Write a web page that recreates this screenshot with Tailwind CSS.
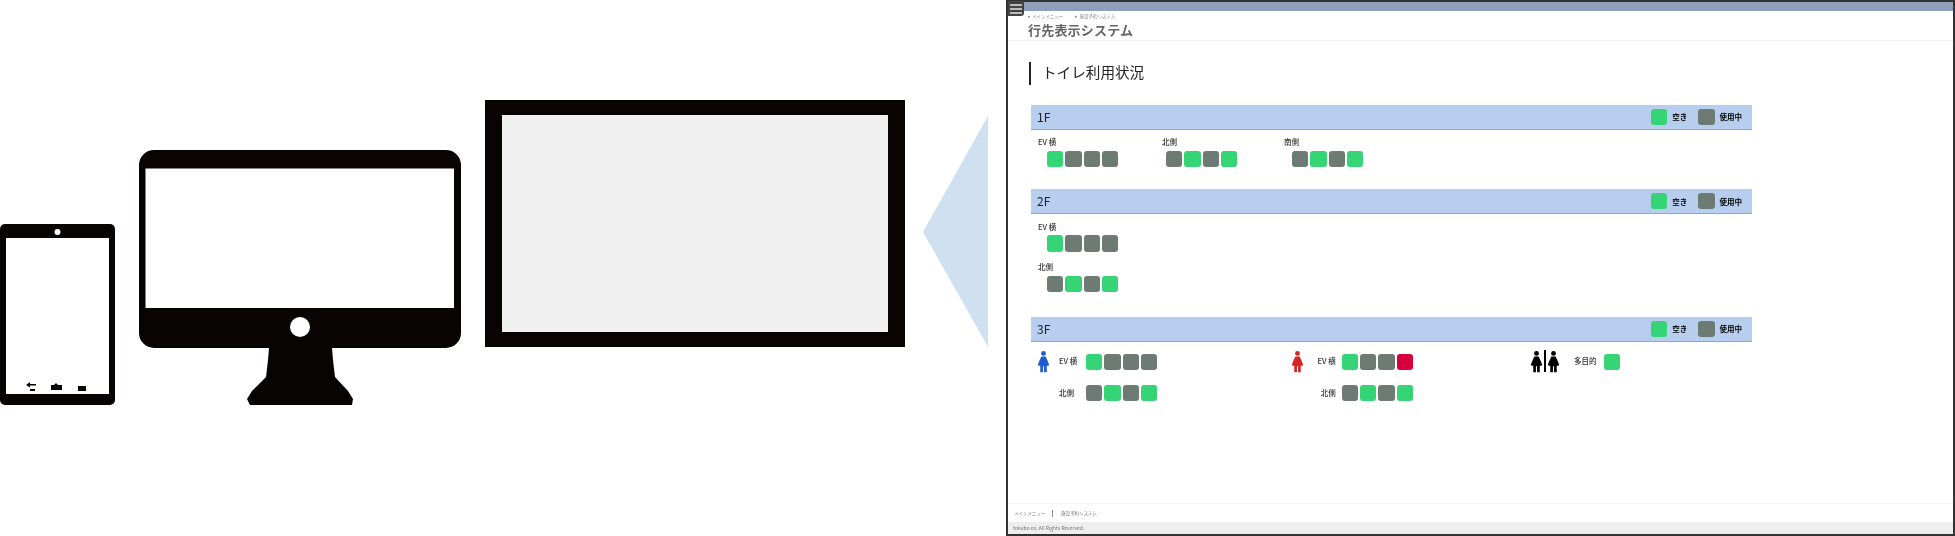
<!DOCTYPE html>
<html lang="ja">
<head>
<meta charset="UTF-8">
<title>トイレ利用状況</title>
<script src="https://cdn.jsdelivr.net/npm/@tailwindcss/browser@4"></script>
</head>
<body class="bg-white">
<svg class="hidden">
  <symbol id="person" viewBox="0 0 14 23">
    <circle cx="7" cy="2.8" r="2.6"/>
    <path d="M4.6 6.2h4.8c.7 1.6 2.2 5.2 3.6 8.6l-.6 1.4H10.500V23H7.600v-6.400H6.400V23H3.500v-6.800H1.600L1 14.800c1.400-3.400 2.900-7 3.600-8.600z"/>
  </symbol>
</svg>
<div class="flex w-[1955px] h-[536px] overflow-hidden font-['Noto_Sans_CJK_JP','Noto_Sans',sans-serif]">

  <!-- devices -->
  <svg class="w-[1006px] h-[536px] shrink-0" viewBox="0 0 1006 536">
    <rect x="0" y="224" width="115" height="181" rx="5" fill="#080404"/>
    <rect x="6" y="238" width="103" height="156" fill="#fff"/>
    <circle cx="57.500" cy="232" r="3" fill="#fff"/>
    <path d="M26 385l4-3v2h6v1.500h-6v2zM30 389h5v2h-5zM51 390v-5h3l2-2 2 2h4v5zM78 386h8v5h-8z" fill="#080404"/>

    <path d="M154 150h292a15 15 0 0 1 15 15v168a15 15 0 0 1-15 15H332l1 12 2 17 13 14 5 8-1 6H250l-3-6 5-8 14-14 2-17 1-12H154a15 15 0 0 1-15-15V165a15 15 0 0 1 15-15z" fill="#080404"/>
    <rect x="145.500" y="168.500" width="308.500" height="139.500" fill="#fff"/>
    <circle cx="300" cy="327" r="10" fill="#fff"/>

    <rect x="485" y="100" width="420" height="247" fill="#080404"/>
    <rect x="502" y="115" width="386" height="217" fill="#f0f0f0"/>
    <path d="M988 116v231l-65-115z" fill="#cfe0f0"/>
  </svg>

  <!-- browser capture -->
  <div class="relative flex flex-col w-[949px] h-[536px] border-2 border-[#333] bg-white blur-[0.5px]">
    <div class="absolute left-0 -top-[1px] w-[16px] h-[15px] bg-[#444] rounded-br-[3px] flex flex-col justify-center gap-[2px] px-[2px]">
      <span class="block h-[2px] bg-[#bbb]"></span>
      <span class="block h-[2px] bg-[#bbb]"></span>
      <span class="block h-[2px] bg-[#bbb]"></span>
    </div>
    <div class="h-[9px] bg-[#8da0b8] shrink-0"></div>

    <div class="h-[30px] shrink-0 border-b border-[#f0f0f0] pl-[20px]">
      <div class="flex gap-[12px] text-[4.500px] leading-[9px] h-[9px] mt-[1px] text-[#888]">
        <span>▸ メインメニュー</span>
        <span>▸ 施設予約システム</span>
      </div>
      <div class="text-[13px] leading-[18px] font-bold tracking-[0.2px] text-[#666]">行先表示システム</div>
    </div>

    <div class="ml-[21px] mt-[21px] h-[23px] border-l-2 border-[#222] pl-[11px] text-[14.600px] leading-[20px] text-[#222] shrink-0">トイレ利用状況</div>

    <!-- 1F -->
    <section class="ml-[23px] w-[721px] mt-[20px] shrink-0">
      <div class="flex items-center h-[25px] bg-[#b8ceee] border-b border-[#7fa6e0] pl-[6px] pr-[10px] text-[12px] text-[#222]">
        <span class="mr-auto">1F</span>
        <span class="w-[16.300px] h-[16.300px] rounded-[3px] bg-[#35d576]"></span>
        <span class="ml-[5px] w-[26px] text-[7.500px] font-bold text-black">空き</span>
        <span class="w-[16.300px] h-[16.300px] rounded-[3px] bg-[#6d7b74]"></span>
        <span class="ml-[5px] text-[7.500px] font-bold text-black">使用中</span>
      </div>
      <div class="flex pl-[7px] pt-[7px] text-[7.500px] leading-[10px] font-medium text-[#333]">
        <div class="w-[124px]">
          <div>EV 横</div>
          <div class="flex gap-[2px] mt-[4px] ml-[9px]">
            <span class="w-[16.300px] h-[16.300px] rounded-[3px] bg-[#35d576]"></span>
            <span class="w-[16.300px] h-[16.300px] rounded-[3px] bg-[#6d7b74]"></span>
            <span class="w-[16.300px] h-[16.300px] rounded-[3px] bg-[#6d7b74]"></span>
            <span class="w-[16.300px] h-[16.300px] rounded-[3px] bg-[#6d7b74]"></span>
          </div>
        </div>
        <div class="w-[122px]">
          <div>北側</div>
          <div class="flex gap-[2px] mt-[4px] ml-[4px]">
            <span class="w-[16.300px] h-[16.300px] rounded-[3px] bg-[#6d7b74]"></span>
            <span class="w-[16.300px] h-[16.300px] rounded-[3px] bg-[#35d576]"></span>
            <span class="w-[16.300px] h-[16.300px] rounded-[3px] bg-[#6d7b74]"></span>
            <span class="w-[16.300px] h-[16.300px] rounded-[3px] bg-[#35d576]"></span>
          </div>
        </div>
        <div>
          <div>南側</div>
          <div class="flex gap-[2px] mt-[4px] ml-[8px]">
            <span class="w-[16.300px] h-[16.300px] rounded-[3px] bg-[#6d7b74]"></span>
            <span class="w-[16.300px] h-[16.300px] rounded-[3px] bg-[#35d576]"></span>
            <span class="w-[16.300px] h-[16.300px] rounded-[3px] bg-[#6d7b74]"></span>
            <span class="w-[16.300px] h-[16.300px] rounded-[3px] bg-[#35d576]"></span>
          </div>
        </div>
      </div>
    </section>

    <!-- 2F -->
    <section class="ml-[23px] w-[721px] mt-[22px] shrink-0">
      <div class="flex items-center h-[25px] bg-[#b8ceee] border-b border-[#7fa6e0] pl-[6px] pr-[10px] text-[12px] text-[#222]">
        <span class="mr-auto">2F</span>
        <span class="w-[16.300px] h-[16.300px] rounded-[3px] bg-[#35d576]"></span>
        <span class="ml-[5px] w-[26px] text-[7.500px] font-bold text-black">空き</span>
        <span class="w-[16.300px] h-[16.300px] rounded-[3px] bg-[#6d7b74]"></span>
        <span class="ml-[5px] text-[7.500px] font-bold text-black">使用中</span>
      </div>
      <div class="pl-[7px] pt-[8px] text-[7.500px] leading-[10px] font-medium text-[#333]">
        <div>EV 横</div>
        <div class="flex gap-[2px] mt-[3px] ml-[9px]">
          <span class="w-[16.300px] h-[16.300px] rounded-[3px] bg-[#35d576]"></span>
          <span class="w-[16.300px] h-[16.300px] rounded-[3px] bg-[#6d7b74]"></span>
          <span class="w-[16.300px] h-[16.300px] rounded-[3px] bg-[#6d7b74]"></span>
          <span class="w-[16.300px] h-[16.300px] rounded-[3px] bg-[#6d7b74]"></span>
        </div>
        <div class="mt-[10px]">北側</div>
        <div class="flex gap-[2px] mt-[4px] ml-[9px]">
          <span class="w-[16.300px] h-[16.300px] rounded-[3px] bg-[#6d7b74]"></span>
          <span class="w-[16.300px] h-[16.300px] rounded-[3px] bg-[#35d576]"></span>
          <span class="w-[16.300px] h-[16.300px] rounded-[3px] bg-[#6d7b74]"></span>
          <span class="w-[16.300px] h-[16.300px] rounded-[3px] bg-[#35d576]"></span>
        </div>
      </div>
    </section>

    <!-- 3F -->
    <section class="ml-[23px] w-[721px] mt-[25px] shrink-0">
      <div class="flex items-center h-[25px] bg-[#b8ceee] border-b border-[#7fa6e0] pl-[6px] pr-[10px] text-[12px] text-[#222]">
        <span class="mr-auto">3F</span>
        <span class="w-[16.300px] h-[16.300px] rounded-[3px] bg-[#35d576]"></span>
        <span class="ml-[5px] w-[26px] text-[7.500px] font-bold text-black">空き</span>
        <span class="w-[16.300px] h-[16.300px] rounded-[3px] bg-[#6d7b74]"></span>
        <span class="ml-[5px] text-[7.500px] font-bold text-black">使用中</span>
      </div>
      <div class="flex pl-[6px] pt-[12px] text-[7.500px] leading-[10px] font-medium text-[#333]">
        <div class="w-[254px] flex">
          <svg class="w-[13px] h-[23px] -mt-[4px] fill-[#1f5bd0] shrink-0"><use href="#person"/></svg>
          <div class="ml-[9px] flex flex-col gap-[15px]">
            <div class="flex items-center"><span class="w-[27px] -mt-[3px]">EV 横</span>
              <div class="flex gap-[2px]">
                <span class="w-[16.300px] h-[16.300px] rounded-[3px] bg-[#35d576]"></span>
                <span class="w-[16.300px] h-[16.300px] rounded-[3px] bg-[#6d7b74]"></span>
                <span class="w-[16.300px] h-[16.300px] rounded-[3px] bg-[#6d7b74]"></span>
                <span class="w-[16.300px] h-[16.300px] rounded-[3px] bg-[#6d7b74]"></span>
              </div>
            </div>
            <div class="flex items-center"><span class="w-[27px] -mt-[1px]">北側</span>
              <div class="flex gap-[2px]">
                <span class="w-[16.300px] h-[16.300px] rounded-[3px] bg-[#6d7b74]"></span>
                <span class="w-[16.300px] h-[16.300px] rounded-[3px] bg-[#35d576]"></span>
                <span class="w-[16.300px] h-[16.300px] rounded-[3px] bg-[#6d7b74]"></span>
                <span class="w-[16.300px] h-[16.300px] rounded-[3px] bg-[#35d576]"></span>
              </div>
            </div>
          </div>
        </div>
        <div class="w-[239px] flex">
          <svg class="w-[13px] h-[23px] -mt-[4px] fill-[#d42626] shrink-0"><use href="#person"/></svg>
          <div class="ml-[13.500px] flex flex-col gap-[15px] items-end">
            <div class="flex items-center"><span class="mr-[6px] -mt-[3px]">EV 横</span>
              <div class="flex gap-[2px]">
                <span class="w-[16.300px] h-[16.300px] rounded-[3px] bg-[#35d576]"></span>
                <span class="w-[16.300px] h-[16.300px] rounded-[3px] bg-[#6d7b74]"></span>
                <span class="w-[16.300px] h-[16.300px] rounded-[3px] bg-[#6d7b74]"></span>
                <span class="w-[16.300px] h-[16.300px] rounded-[3px] bg-[#d8003c]"></span>
              </div>
            </div>
            <div class="flex items-center"><span class="mr-[6px] -mt-[1px]">北側</span>
              <div class="flex gap-[2px]">
                <span class="w-[16.300px] h-[16.300px] rounded-[3px] bg-[#6d7b74]"></span>
                <span class="w-[16.300px] h-[16.300px] rounded-[3px] bg-[#35d576]"></span>
                <span class="w-[16.300px] h-[16.300px] rounded-[3px] bg-[#6d7b74]"></span>
                <span class="w-[16.300px] h-[16.300px] rounded-[3px] bg-[#35d576]"></span>
              </div>
            </div>
          </div>
        </div>
        <div class="flex">
          <div class="flex -mt-[4px] h-[23px] text-black">
            <svg class="w-[13px] h-[23px] fill-black"><use href="#person"/></svg>
            <span class="w-[2px] h-[22px] bg-black mx-[1px]"></span>
            <svg class="w-[13px] h-[23px] fill-black"><use href="#person"/></svg>
          </div>
          <div class="flex items-center h-[16.300px] ml-[14px]">
            <span class="w-[29.500px] -mt-[3px]">多目的</span>
            <span class="w-[16.300px] h-[16.300px] rounded-[3px] bg-[#35d576]"></span>
          </div>
        </div>
      </div>
    </section>

    <footer class="mt-auto shrink-0">
      <div class="flex items-center h-[19px] border-t border-[#f3f3f3] pl-[6px] text-[4.500px] text-[#777]">
        <span class="w-[38px]">メインメニュー</span>
        <span class="w-px h-[7px] bg-[#888] mr-[8px]"></span>
        <span>施設予約システム</span>
      </div>
      <div class="h-[12px] bg-[#eee] pl-[5px] text-[5px] leading-[12px] text-[#777]">tokubo co. All Rights Reserved.</div>
    </footer>
  </div>
</div>
</body>
</html>
